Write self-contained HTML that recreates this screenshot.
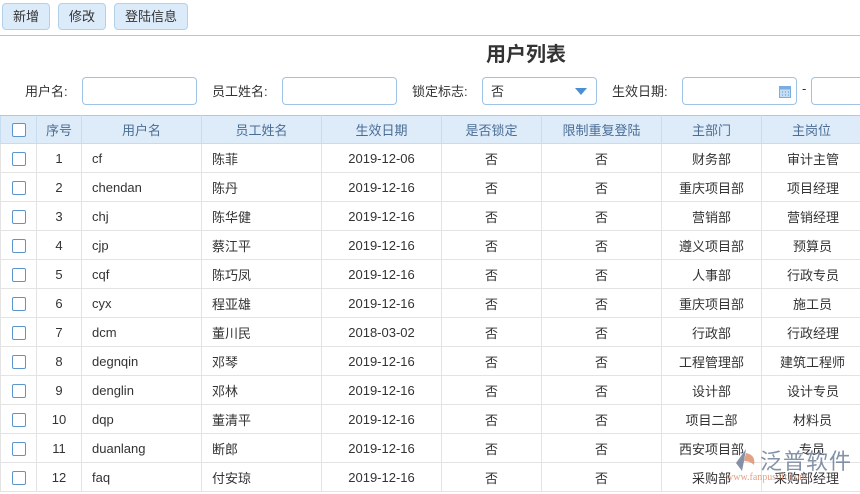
<!DOCTYPE html>
<html><head><meta charset="utf-8"><style>
*{box-sizing:border-box;margin:0;padding:0}
body{width:860px;height:494px;overflow:hidden;background:#fff;font-family:"Liberation Sans","Noto Sans CJK SC",sans-serif;font-size:13px;color:#333;position:relative}
.btn{position:absolute;top:3px;height:27px;background:#dcebf9;border:1px solid #b3d0ea;border-radius:4px;font-size:13px;line-height:25px;text-align:center;color:#333}
.line{position:absolute;top:35px;left:0;width:860px;height:1px;background:#a9c9e6}
.title{position:absolute;top:38px;left:486px;font-size:20px;font-weight:bold;color:#333}
.lbl{position:absolute;top:81px;font-size:13px}
.inp{position:absolute;top:77px;height:28px;border:1px solid #9ec3e6;border-radius:4px;background:#fff}
table{position:absolute;top:115px;left:0;border-collapse:collapse;table-layout:fixed;width:880px}
td,th{height:29px;border:1px solid #e3e3e3;text-align:center;font-weight:normal;white-space:nowrap;overflow:hidden}
th{height:28px;background:#deecfa;color:#4a6d94;border-color:#c7dcef;border-top:1px solid #a9c9e6}
td.l{text-align:left;padding-left:10px}
.cb{display:inline-block;width:14px;height:14px;border:1px solid #5b95cc;border-radius:2px;background:#fff;vertical-align:middle}
</style></head><body>
<div class="btn" style="left:2px;width:48px">新增</div>
<div class="btn" style="left:58px;width:48px">修改</div>
<div class="btn" style="left:114px;width:74px">登陆信息</div>
<div class="line"></div>
<div class="title">用户列表</div>
<div class="lbl" style="left:25px">用户名:</div>
<div class="inp" style="left:82px;width:115px"></div>
<div class="lbl" style="left:212px">员工姓名:</div>
<div class="inp" style="left:282px;width:115px"></div>
<div class="lbl" style="left:412px">锁定标志:</div>
<div class="inp" style="left:482px;width:115px;padding:3px 0 0 8px">否<span style="position:absolute;right:9px;top:10px;border-left:6px solid transparent;border-right:6px solid transparent;border-top:7px solid #4a8fd4"></span></div>
<div class="lbl" style="left:612px">生效日期:</div>
<div class="inp" style="left:682px;width:115px"><svg style="position:absolute;right:5px;top:7px" width="12" height="13" viewBox="0 0 12 13"><rect x="0.5" y="1.5" width="11" height="11" fill="#c6dcf2" stroke="#7aaee0"/><rect x="0.5" y="1.5" width="11" height="3" fill="#7aaee0"/><path d="M3 7h1M6 7h1M9 7h1M3 10h1M6 10h1M9 10h1" stroke="#5b95cc"/></svg></div>
<div class="lbl" style="left:802px">-</div>
<div class="inp" style="left:811px;width:70px"></div>
<table>
<colgroup><col style="width:36px"><col style="width:45px"><col style="width:120px"><col style="width:120px"><col style="width:120px"><col style="width:100px"><col style="width:120px"><col style="width:100px"><col style="width:119px"></colgroup>
<tr><th><span class="cb"></span></th><th>序号</th><th>用户名</th><th>员工姓名</th><th>生效日期</th><th>是否锁定</th><th>限制重复登陆</th><th>主部门</th><th style="text-align:left;padding-left:30px">主岗位</th></tr>
<tr><td><span class="cb"></span></td><td>1</td><td class="l">cf</td><td class="l">陈菲</td><td>2019-12-06</td><td>否</td><td>否</td><td>财务部</td><td style="text-align:left;padding-left:25px">审计主管</td></tr>
<tr><td><span class="cb"></span></td><td>2</td><td class="l">chendan</td><td class="l">陈丹</td><td>2019-12-16</td><td>否</td><td>否</td><td>重庆项目部</td><td style="text-align:left;padding-left:25px">项目经理</td></tr>
<tr><td><span class="cb"></span></td><td>3</td><td class="l">chj</td><td class="l">陈华健</td><td>2019-12-16</td><td>否</td><td>否</td><td>营销部</td><td style="text-align:left;padding-left:25px">营销经理</td></tr>
<tr><td><span class="cb"></span></td><td>4</td><td class="l">cjp</td><td class="l">蔡江平</td><td>2019-12-16</td><td>否</td><td>否</td><td>遵义项目部</td><td style="text-align:left;padding-left:31px">预算员</td></tr>
<tr><td><span class="cb"></span></td><td>5</td><td class="l">cqf</td><td class="l">陈巧凤</td><td>2019-12-16</td><td>否</td><td>否</td><td>人事部</td><td style="text-align:left;padding-left:25px">行政专员</td></tr>
<tr><td><span class="cb"></span></td><td>6</td><td class="l">cyx</td><td class="l">程亚雄</td><td>2019-12-16</td><td>否</td><td>否</td><td>重庆项目部</td><td style="text-align:left;padding-left:31px">施工员</td></tr>
<tr><td><span class="cb"></span></td><td>7</td><td class="l">dcm</td><td class="l">董川民</td><td>2018-03-02</td><td>否</td><td>否</td><td>行政部</td><td style="text-align:left;padding-left:25px">行政经理</td></tr>
<tr><td><span class="cb"></span></td><td>8</td><td class="l">degnqin</td><td class="l">邓琴</td><td>2019-12-16</td><td>否</td><td>否</td><td>工程管理部</td><td style="text-align:left;padding-left:18px">建筑工程师</td></tr>
<tr><td><span class="cb"></span></td><td>9</td><td class="l">denglin</td><td class="l">邓林</td><td>2019-12-16</td><td>否</td><td>否</td><td>设计部</td><td style="text-align:left;padding-left:25px">设计专员</td></tr>
<tr><td><span class="cb"></span></td><td>10</td><td class="l">dqp</td><td class="l">董清平</td><td>2019-12-16</td><td>否</td><td>否</td><td>项目二部</td><td style="text-align:left;padding-left:31px">材料员</td></tr>
<tr><td><span class="cb"></span></td><td>11</td><td class="l">duanlang</td><td class="l">断郎</td><td>2019-12-16</td><td>否</td><td>否</td><td>西安项目部</td><td style="text-align:left;padding-left:37px">专员</td></tr>
<tr><td><span class="cb"></span></td><td>12</td><td class="l">faq</td><td class="l">付安琼</td><td>2019-12-16</td><td>否</td><td>否</td><td>采购部</td><td style="text-align:left;padding-left:12px">采购部经理</td></tr>
</table>
<div style="position:absolute;left:732px;top:444px;width:120px;height:40px;opacity:.85">
<svg style="position:absolute;left:0;top:3px" width="26" height="26" viewBox="0 0 26 26"><path d="M14 2 L4 16 L10 24 L12 14 Z" fill="#6f7f99"/><path d="M14 6 Q24 8 22 18 Q18 14 12 14 Z" fill="#e0906e"/></svg>
<span style="position:absolute;left:28px;top:0;font-size:22px;color:#6f7f99;letter-spacing:1px">泛普软件</span>
<span style="position:absolute;left:-6px;top:28px;font-size:10px;color:#e0906e;font-family:'Liberation Serif',serif">www.fanpusoft.com</span>
</div>
</body></html>
